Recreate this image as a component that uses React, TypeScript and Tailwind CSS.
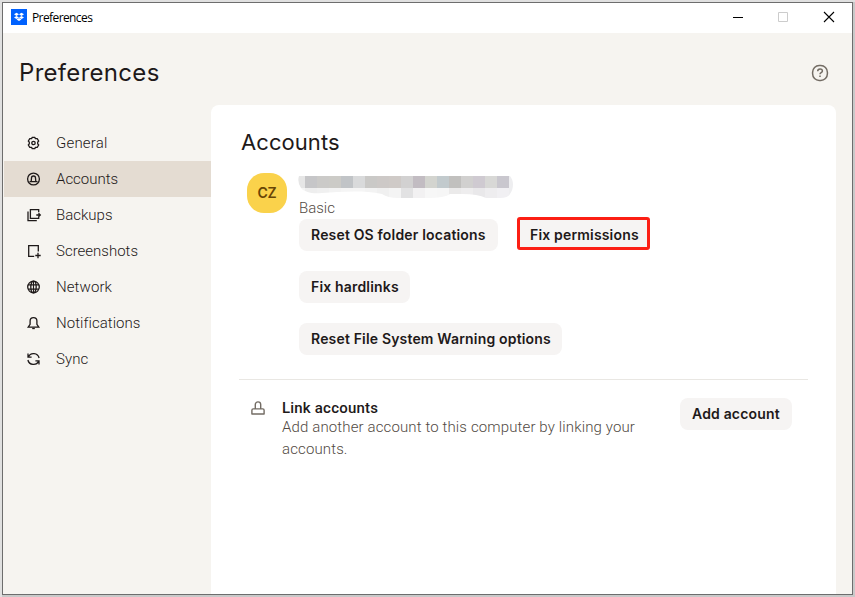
import React from 'react';

const navItems = [
  { label: 'General', icon: 'general', tracking: 'tracking-[0.2px]' },
  { label: 'Accounts', icon: 'accounts', tracking: 'tracking-normal', active: true },
  { label: 'Backups', icon: 'backups', tracking: 'tracking-normal' },
  { label: 'Screenshots', icon: 'screenshots', tracking: 'tracking-normal' },
  { label: 'Network', icon: 'network', tracking: 'tracking-[0.1px]' },
  { label: 'Notifications', icon: 'notifications', tracking: 'tracking-[0.05px]' },
  { label: 'Sync', icon: 'sync', tracking: 'tracking-[0.1px]' },
];

const topCells = ['#e6e6e6', '#c6c6c8', '#cbcac8', '#cccbc7', '#c1c4c7', '#d9dadb', '#cac9c7', '#cdc9c7', '#cfcac7', '#d2d1d1', '#c2bcc2', '#d3d4cf', '#c2cacd', '#c1c0be', '#d1d0cf', '#cfcad1', '#d8d8d6', '#c9c7ce'];
const bottomCells = ['#f5f5f5', '#eeeeee', '#f0f0f0', '#f3f3f3', '#f5f5f5', '#f5f5f5', '#f3f3f3', '#f0f0f0', '#f4f4f4', '#e2e2e3', '#f2f1f2', '#f7f7f7', '#f6f6f6', '#ebeaea', '#eeedee', '#e9e8ea', '#eeedef', '#f1f0f3'];

const NavIcon: React.FC<{ name: string }> = ({ name }) => (
  <svg width="16" height="16" viewBox="0.5 0 16 16" fill="none" stroke="#1e1919" strokeWidth="1.3" className="shrink-0">
    {name === 'general' && (
      <>
        <path strokeLinejoin="round" d="M6.7 2.3h2.6l.6 1.4 1.8-.1 1.5 2.4-1 1.2v1.6l1 1.2-1.5 2.4-1.8-.1-.6 1.4H6.7l-.6-1.4-1.8.1L2.8 10l1-1.2V7.2L2.8 6l1.5-2.4 1.8.1z" />
        <circle cx="8" cy="8" r="1.7" />
      </>
    )}
    {name === 'accounts' && (
      <>
        <circle cx="8" cy="8" r="5.9" />
        <path d="M4 10.6h8M5.7 10.4 6 7a2 2 0 0 1 4 0l.3 3.4" />
      </>
    )}
    {name === 'backups' && (
      <path d="M13.2 5.2V2.7H4.9v8.6h8.3v-1.5M2.5 4.4v9.3h8.8M10.8 8h4M13 6.2 14.8 8 13 9.8" />
    )}
    {name === 'screenshots' && <path d="M12.8 8.4V2.7H3.2v10.6h5.5M12.5 9.8v5.4M9.8 12.5h5.4" />}
    {name === 'network' && (
      <>
        <circle cx="8" cy="8" r="5.8" />
        <ellipse cx="8" cy="8" rx="2.7" ry="5.8" />
        <path d="M8 2v12M2.6 5.9h10.8M2.6 10.1h10.8" strokeWidth="1.1" />
      </>
    )}
    {name === 'notifications' && (
      <>
        <path d="M2.7 12.2h10.6l-1.9-2.8V6a3.4 3.4 0 0 0-6.8 0v3.4z" />
        <path d="M6.7 13.5h2.6" />
      </>
    )}
    {name === 'sync' && <path d="M2.5 2.6v3.6h3.6M2.8 6A5.7 5.7 0 0 1 13.6 7M13.5 13.4V9.8H9.9M13.2 10A5.7 5.7 0 0 1 2.4 9" />}
  </svg>
);

const Button: React.FC<{ children: React.ReactNode; className: string }> = ({ children, className }) => (
  <button className={`rounded-lg bg-[#f6f4f3] text-left font-['Inter','Liberation_Sans',sans-serif] text-sm font-semibold tracking-[0.17px] whitespace-nowrap text-[#1e1919] ${className}`}>
    {children}
  </button>
);

const TitleBar: React.FC = () => (
  <header className="flex h-[30px] shrink-0 items-center bg-white pl-2 text-black">
    <div className="mb-0.5 flex size-4 items-center justify-center bg-[#0061fe]">
      <svg width="10" height="10" viewBox="0 0 10 10" fill="#fff">
        <path d="M2.5.8 5 2.3 2.5 3.9 0 2.3zM7.5.8 10 2.3 7.5 3.9 5 2.3zM2.5 3.9 5 5.4 2.5 7 0 5.4zM7.5 3.9 10 5.4 7.5 7 5 5.4zM2.5 7.5 5 6l2.5 1.5L5 9z" />
      </svg>
    </div>
    <span className="ml-[5px] font-['Open_Sans','Noto_Sans',sans-serif] text-xs tracking-[-0.6px]">Preferences</span>
    <svg width="10" height="10" viewBox="0 0 10 10" stroke="#000" className="mb-0.5 ml-auto">
      <path d="M0 5.5h10" />
    </svg>
    <svg width="10" height="10" viewBox="0 0 10 10" fill="none" stroke="#ccc" className="mb-0.5 ml-[35px]">
      <path d="M.5.5h9v9h-9z" />
    </svg>
    <svg width="12" height="12" viewBox="0 0 12 12" stroke="#000" strokeWidth="1.1" className="mr-[17px] mb-0.5 ml-[35px]">
      <path d="m1 1 10 10M11 1 1 11" />
    </svg>
  </header>
);

const Sidebar: React.FC = () => (
  <nav className="w-[208px] shrink-0 pt-5 pl-px">
    {navItems.map((item) => (
      <div
        key={item.label}
        className={`flex h-9 items-center gap-[14px] pl-[22px] text-[#1e1919] ${item.active ? 'bg-[#e4dcd2]' : ''}`}
      >
        <NavIcon name={item.icon} />
        <span className={`font-['Roboto','Liberation_Sans',sans-serif] text-[15px] font-light ${item.tracking}`}>{item.label}</span>
      </div>
    ))}
  </nav>
);

const MaskedName: React.FC = () => (
  <svg width="216" height="24" viewBox="0 0 216 24" className="block">
    <defs>
      <clipPath id="name-mask">
        <path d="M1 2H212C216 7 216 14 212 20Q210 24 202 24H188Q180 20 164 20H152Q147 24 130 24H100Q90 24 84 20C64 16 42 18 24 19C14 20 6 18 3 14Q-1 8 1 2z" />
      </clipPath>
    </defs>
    <g clipPath="url(#name-mask)">
      {topCells.map((color, index) => (
        <rect key={index} x={index * 12 - 5} y="2" width="12" height="12" fill={color} />
      ))}
      {bottomCells.map((color, index) => (
        <rect key={index} x={index * 12 - 5} y="14" width="12" height="10" fill={color} />
      ))}
      <rect x="211" y="2" width="5" height="22" fill="#eeeef0" />
    </g>
  </svg>
);

const App: React.FC = () => {
  return (
    <div className="flex h-[597px] w-[855px] border-t-2 border-l-2 border-[#e0e0e0] bg-[#c9c9c9]">
      <div className="flex h-[593px] w-[851px] flex-col border border-[#6d6d6d] bg-[#f6f4f0]">
        <TitleBar />
        <div className="flex h-[72px] shrink-0 items-center justify-between pr-[23px] pl-4 text-[#1e1919]">
          <h1 className="mt-2 font-['Inter','Liberation_Sans',sans-serif] text-2xl leading-8 tracking-[0.3px]">Preferences</h1>
          <svg width="18" height="18" viewBox="0 0 18 18" fill="none" stroke="#736c64" strokeWidth="1.5" className="mt-2">
            <rect x="1.6" y="1.6" width="14.8" height="14.8" rx="6.6" />
            <path d="M6.7 7.2c0-3 4.7-3 4.7-.3 0 1.7-2.4 1.6-2.4 3.3M9 11.6v1.5" />
          </svg>
        </div>

        <div className="flex min-h-0 flex-1">
          <Sidebar />
          <main className="w-[625px] rounded-t-lg bg-white pt-[23px] pl-7">
            <h2 className="ml-0.5 font-['Inter','Liberation_Sans',sans-serif] text-[22px] leading-7 tracking-[0.07px] text-[#1e1919]">Accounts</h2>

            {/* Account details */}
            <section className="flex pt-3 pl-2">
              <div className="mt-[5px] flex size-10 items-center justify-center rounded-[17px] bg-[#fad24b] font-['Inter','Liberation_Sans',sans-serif] text-sm font-semibold tracking-[-0.3px] text-[#684505]">
                CZ
              </div>
              <div className="ml-[11px]">
                <div className="pt-1.5"><MaskedName /></div>
                <p className="ml-px h-[21px] font-['Roboto','Liberation_Sans',sans-serif] text-[15px] leading-[20px] font-light text-[#524a44]">Basic</p>
                <div className="ml-px flex flex-col gap-5">
                  <div className="flex h-8 gap-[19px]">
                    <Button className="h-8 w-[199px] pl-3">Reset OS folder locations</Button>
                    <div className="-mt-0.5 h-[33px] w-[133px] rounded-[3px] border-3 border-[#fc1f14] bg-[#f6f4f3]">
                      <Button className="block h-[27px] w-[127px] pt-[3px] pl-2.5">Fix permissions</Button>
                    </div>
                  </div>
                  <Button className="h-8 w-[111px] pl-3">Fix hardlinks</Button>
                  <Button className="h-8 w-[263px] pl-3">Reset File System Warning options</Button>
                </div>
              </div>
            </section>

            {/* Link another account */}
            <section className="mt-6 flex w-[569px] border-t border-[#e9e7e3] pt-[18px] pl-3">
              <svg width="14" height="14" viewBox="0 0 14 14" fill="none" stroke="#736c64" strokeWidth="1.4" strokeLinejoin="round" className="mt-[3px] shrink-0">
                <path d="M.9 13V9.2c0-.8.5-1.3 1.3-1.3h9.6c.8 0 1.3.5 1.3 1.3V13zM4.3 7.8V3.6a2.7 2.7 0 0 1 5.4 0v4.2" />
              </svg>
              <div className="ml-[17px] w-[398px] font-['Roboto','Liberation_Sans',sans-serif] text-[15px]">
                <h3 className="leading-[20px] font-medium tracking-[0.2px] text-[#1e1919]">Link accounts</h3>
                <p className="-mt-[2px] w-[370px] leading-[22px] font-light tracking-[0.13px] text-[#524a44]">
                  Add another account to this computer by linking your accounts.
                </p>
              </div>
              <Button className="h-8 w-[112px] pl-3">Add account</Button>
            </section>
          </main>
        </div>
      </div>
    </div>
  );
};

export default App;
